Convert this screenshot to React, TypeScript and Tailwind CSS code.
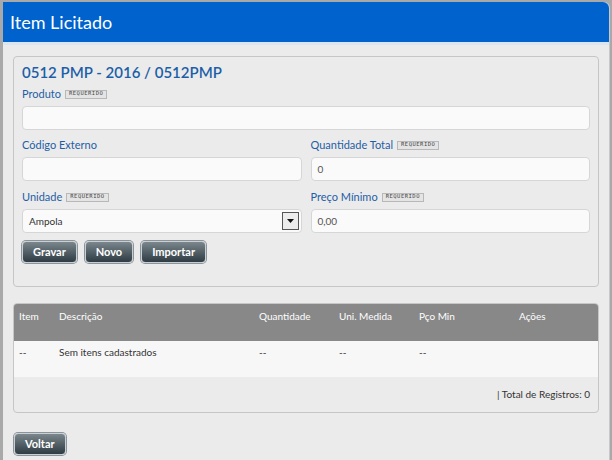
import React from "react";

const font = "font-['Lato','DejaVu_Sans',sans-serif]";

function Req() {
  return (
    <span className="ml-[4px] inline-flex h-[9px] items-center border border-[#b8b8b8] bg-[#e4e4e4] px-[3px] font-['DejaVu_Sans_Mono',monospace] text-[5.5px] leading-none tracking-[0.5px] text-[#444]">
      REQUERIDO
    </span>
  );
}

function Label({ text, req }: { text: string; req?: boolean }) {
  return (
    <div className="flex h-[14px] items-center text-[11px] text-[#1f5ea6]">
      {text}
      {req && <Req />}
    </div>
  );
}

function Input({ value }: { value?: string }) {
  return (
    <div className="mt-[5px] flex h-[24px] items-center rounded-[4px] border border-[#d6d6d6] bg-[#fafafa] px-[6px] text-[10px] text-[#555]">
      {value}
    </div>
  );
}

function Btn({ children }: { children: React.ReactNode }) {
  return (
    <button className="h-[22px] rounded-[4px] border border-[#c9cfd3] bg-gradient-to-b from-[#7b878d] to-[#2f3c43] px-[10px] text-[11px] font-bold text-white shadow-[0_0_0_1px_#8a959b]">
      {children}
    </button>
  );
}

export default function App() {
  return (
    <div className={`flex h-[460px] w-[612px] overflow-hidden bg-[#a9a9a9] ${font}`}>
      <div className="ml-[3px] mt-[2px] flex w-[607px] shrink-0 flex-col rounded-tr-[6px] border-r border-[#c8c8c8] bg-[#ebebeb]">
        <div className="flex h-[40px] shrink-0 items-center rounded-tr-[6px] bg-[#0062cc] px-[7px] pt-[1px] text-[18px] text-white">
          Item Licitado
        </div>
        <div className="h-[3px] shrink-0 bg-[#dce6f2]" />
        <div className="shrink-0 px-[10px] pt-[11px]">
          <div className="rounded-[4px] border border-[#c6c6c6] bg-[#ebebeb] px-[8px] pb-[23px] pt-[5px]">
            <div className="h-[20px] text-[15px] font-semibold leading-[20px] text-[#1c5fa8]">0512 PMP - 2016 / 0512PMP</div>
            <div className="mt-[5px]">
              <Label text="Produto" req />
              <Input />
            </div>
            <div className="mt-[8px] grid grid-cols-2 gap-x-[9px]">
              <div>
                <Label text="Código Externo" />
                <Input />
              </div>
              <div>
                <Label text="Quantidade Total" req />
                <Input value="0" />
              </div>
            </div>
            <div className="mt-[9px] grid grid-cols-2 gap-x-[9px]">
              <div>
                <Label text="Unidade" req />
                <div className="mt-[5px] flex h-[24px] items-center justify-between rounded-[4px] border border-[#d6d6d6] bg-[#fafafa] pl-[6px] pr-[2px] text-[10px] text-[#333]">
                  Ampola
                  <span className="flex h-[18px] w-[17px] items-center justify-center border border-[#555] bg-[#ececec]">
                    <svg width="7" height="4" viewBox="0 0 7 4">
                      <path d="M0 0h7L3.5 4z" fill="#111" />
                    </svg>
                  </span>
                </div>
              </div>
              <div>
                <Label text="Preço Mínimo" req />
                <Input value="0,00" />
              </div>
            </div>
            <div className="mt-[8px] flex gap-[8px]">
              <Btn>Gravar</Btn>
              <Btn>Novo</Btn>
              <Btn>Importar</Btn>
            </div>
          </div>

          <div className="mt-[16px] overflow-hidden rounded-[4px] border border-[#c6c6c6] bg-[#ebebeb]">
            <div className="flex h-[37px] items-start bg-[#888888] pt-[5px] text-[10px] text-white">
              <div className="w-[45px] pl-[5px]">Item</div>
              <div className="w-[200px]">Descrição</div>
              <div className="w-[80px]">Quantidade</div>
              <div className="w-[80px]">Uni. Medida</div>
              <div className="w-[100px]">Pço Min</div>
              <div>Ações</div>
            </div>
            <div className="flex h-[36px] items-start bg-[#f7f7f7] pt-[4px] text-[10px] text-[#333]">
              <div className="w-[45px] pl-[5px]">--</div>
              <div className="w-[200px]">Sem itens cadastrados</div>
              <div className="w-[80px]">--</div>
              <div className="w-[80px]">--</div>
              <div className="w-[100px]">--</div>
            </div>
            <div className="flex h-[35px] items-center justify-end pr-[8px] text-[10px] text-[#333]">
              | Total de Registros: 0
            </div>
          </div>

          <div className="mt-[17px] pl-[1px]">
            <Btn>Voltar</Btn>
          </div>
        </div>
      </div>
    </div>
  );
}
